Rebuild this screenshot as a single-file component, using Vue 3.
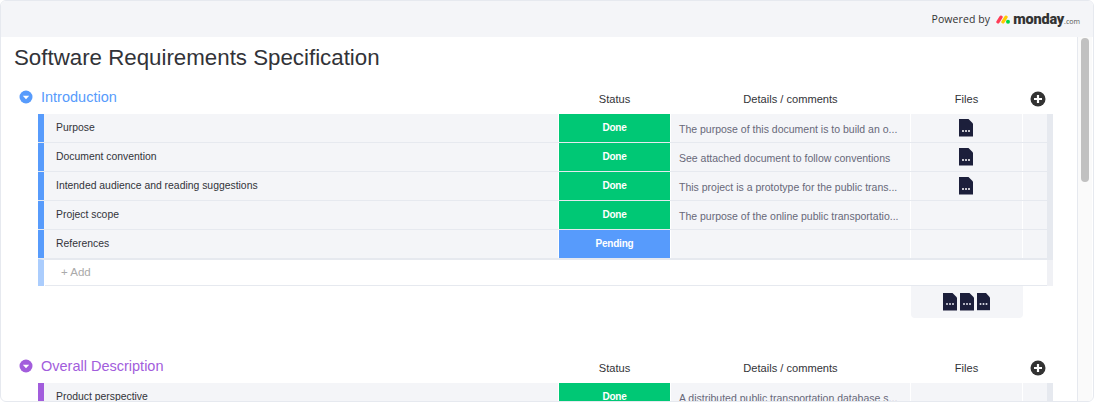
<script setup>
const groups = [
  {
    name: 'Introduction',
    color: '#579bfc',
    rows: [
      { name: 'Purpose', status: 'Done', details: 'The purpose of this document is to build an o...', file: true },
      { name: 'Document convention', status: 'Done', details: 'See attached document to follow conventions', file: true },
      { name: 'Intended audience and reading suggestions', status: 'Done', details: 'This project is a prototype for the public trans...', file: true },
      { name: 'Project scope', status: 'Done', details: 'The purpose of the online public transportatio...', file: false },
      { name: 'References', status: 'Pending', details: '', file: false },
    ],
    footer: true,
  },
  {
    name: 'Overall Description',
    color: '#a25ddc',
    rows: [
      { name: 'Product perspective', status: 'Done', details: 'A distributed public transportation database s...', file: false },
    ],
    footer: false,
  },
]
</script>

<template>
  <div class="window">
    <header class="topbar">
      <span class="powered">Powered by</span>
      <svg class="logo-mark" width="14" height="9" viewBox="0 0 21 13">
        <line x1="3" y1="10" x2="7.500" y2="3" stroke="#ff3d57" stroke-width="5" stroke-linecap="round" />
        <line x1="10.500" y1="10" x2="15" y2="3" stroke="#ffcb00" stroke-width="5" stroke-linecap="round" />
        <circle cx="18" cy="10" r="3" fill="#00d647" />
      </svg>
      <span class="brand">monday</span><span class="brand-com">.com</span>
    </header>

    <div class="body">
      <main class="content">
        <h1 class="title">Software Requirements Specification</h1>

        <section v-for="group in groups" :key="group.name" class="group">
          <div class="table-row head">
            <div class="group-name" :style="{ color: group.color }">
              <svg class="toggle" width="14" height="14" viewBox="0 0 14 14">
                <circle cx="7" cy="7" r="6.500" :fill="group.color" />
                <path d="M3.800 5.800h6.400L7 9.200z" fill="#fff" />
              </svg>
              {{ group.name }}
            </div>
            <div class="col-title">Status</div>
            <div class="col-title">Details / comments</div>
            <div class="col-title">Files</div>
            <div class="add-col">
              <svg width="16" height="16" viewBox="0 0 16 16">
                <circle cx="8" cy="8" r="7.500" fill="#333" />
                <path d="M8 4v8M4 8h8" stroke="#fff" stroke-width="2.200" />
              </svg>
            </div>
          </div>

          <div v-for="row in group.rows" :key="row.name" class="table-row item">
            <div class="name-cell" :style="{ borderLeftColor: group.color }">{{ row.name }}</div>
            <div class="status-cell" :class="row.status.toLowerCase()">{{ row.status }}</div>
            <div class="details-cell">{{ row.details }}</div>
            <div class="files-cell">
              <svg v-if="row.file" class="file" width="14" height="18" viewBox="0 0 14 18">
                <path d="M0 0h9.500L14 4.500V17.500H0z" fill="#1c1f3b" />
                <circle cx="4" cy="12" r="1" fill="#fff" />
                <circle cx="7" cy="12" r="1" fill="#fff" />
                <circle cx="10" cy="12" r="1" fill="#fff" />
              </svg>
            </div>
            <div class="blank-cell"></div>
            <div class="end-cell"></div>
          </div>

          <template v-if="group.footer">
            <div class="add-row">
              <div class="add-input">+ Add</div>
              <div class="add-end"></div>
            </div>
            <div class="summary-row">
              <div class="summary">
                <svg class="file" width="14" height="18" viewBox="0 0 14 18">
                  <path d="M0 0h9.500L14 4.500V17.500H0z" fill="#1c1f3b" />
                  <circle cx="4" cy="11" r="1" fill="#dfe0ea" />
                  <circle cx="7" cy="11" r="1" fill="#dfe0ea" />
                  <circle cx="10" cy="11" r="1" fill="#dfe0ea" />
                </svg>
                <svg class="file" width="14" height="18" viewBox="0 0 14 18">
                  <path d="M0 0h9.500L14 4.500V17.500H0z" fill="#1c1f3b" />
                  <circle cx="4" cy="11" r="1" fill="#dfe0ea" />
                  <circle cx="7" cy="11" r="1" fill="#dfe0ea" />
                  <circle cx="10" cy="11" r="1" fill="#dfe0ea" />
                </svg>
                <svg class="file" width="13" height="18" viewBox="0 0 13 18">
                  <path d="M0 0h9l4 4.500V17H0z" fill="#1c1f3b" />
                  <path d="M0 17.500h13" stroke="#c5c7d0" />
                  <circle cx="3.500" cy="11" r="1" fill="#dfe0ea" />
                  <circle cx="6.500" cy="11" r="1" fill="#dfe0ea" />
                  <circle cx="9.500" cy="11" r="1" fill="#dfe0ea" />
                </svg>
              </div>
            </div>
          </template>
        </section>
      </main>

      <aside class="scrollbar">
        <div class="thumb"></div>
      </aside>
    </div>
  </div>
</template>

<style>
html, body {
  margin: 0;
  background: #fff;
  overflow: hidden;
}
</style>

<style scoped>
.window {
  width: 1094px;
  height: 402px;
  box-sizing: border-box;
  border: 1px solid #e6e9ef;
  border-radius: 6px;
  overflow: hidden;
  display: flex;
  flex-direction: column;
  background: #fff;
  font-family: "Liberation Sans", Arial, sans-serif;
  color: #323338;
}

.topbar {
  height: 36px;
  flex: none;
  background: #f4f5f8;
  display: flex;
  align-items: center;
  justify-content: flex-end;
  padding-right: 13px;
}

.powered {
  font-family: "Open Sans", sans-serif;
  font-size: 10.500px;
  letter-spacing: 0.1px;
  color: #333;
  margin-right: 6px;
}

.logo-mark {
  margin-right: 3px;
}

.brand {
  font-family: Roboto, sans-serif;
  font-weight: 900;
  font-size: 14.500px;
  letter-spacing: -0.2px;
  color: #333;
}

.brand-com {
  font-family: "Open Sans", sans-serif;
  font-size: 7px;
  color: #555;
  margin-top: 5px;
}

.body {
  flex: 1;
  min-height: 0;
  display: flex;
}

.content {
  flex: 1;
  min-width: 0;
  padding-left: 13px;
  overflow: hidden;
}

.title {
  margin: 0;
  padding-top: 6px;
  height: 30px;
  font-size: 22.300px;
  line-height: 30px;
  font-weight: 400;
  color: #323338;
}

.group {
  padding-bottom: 24px;
}

.table-row {
  display: grid;
  grid-template-columns: 520px 111px 239px 111px 24px 5px;
  column-gap: 1px;
  margin-left: 24px;
  width: 1015px;
}

.head {
  height: 41px;
  margin-left: 5px;
  width: 1027px;
  grid-template-columns: 539px 111px 239px 111px 23px;
  align-items: center;
  padding-top: 11px;
  box-sizing: border-box;
}

.group-name {
  display: flex;
  align-items: center;
  gap: 8px;
  font-size: 14.500px;
  height: 18px;
  margin-top: -4px;
}

.toggle {
  flex: none;
}

.col-title {
  text-align: center;
  font-size: 11.100px;
  color: #323338;
}

.add-col {
  display: flex;
  justify-content: flex-end;
  height: 16px;
}

.item {
  height: 28px;
  margin-bottom: 1px;
  font-size: 10.500px;
  line-height: 28px;
  box-shadow: 0 1px 0 #e6e9ef;
}

.name-cell {
  background: #f4f5f8;
  border-left: 6px solid;
  padding-left: 12px;
  color: #323338;
  font-size: 10.400px;
}

.status-cell {
  color: #fff;
  font-weight: 700;
  text-align: center;
  font-size: 10px;
  letter-spacing: -0.2px;
}

.status-cell.done {
  background: #00c875;
}

.status-cell.pending {
  background: #579bfc;
}

.details-cell {
  background: #f4f5f8;
  padding-left: 8px;
  line-height: 30px;
  color: #676879;
  white-space: nowrap;
  overflow: hidden;
}

.files-cell {
  background: #f4f5f8;
  display: flex;
  align-items: center;
  justify-content: center;
  padding-right: 2px;
}

.blank-cell {
  background: #f4f5f8;
}

.end-cell {
  background: #e6e9ef;
  margin-left: -1px;
}

.add-row {
  display: flex;
  margin-left: 24px;
  width: 1015px;
  height: 27px;
  border-left: 6px solid #abcdfd;
  border-top: 1px solid #e6e9ef;
  box-sizing: border-box;
}

.add-input {
  flex: 1;
  margin-left: 1px;
  padding-left: 16px;
  line-height: 24px;
  font-size: 11.500px;
  color: #aaa;
  border-bottom: 1px solid #e6e9ef;
}

.add-end {
  width: 6px;
  background: #f0f1f5;
}

.summary-row {
  display: flex;
  margin-left: 897px;
}

.summary {
  width: 112px;
  height: 32px;
  box-sizing: border-box;
  padding-right: 2px;
  background: #f4f5f8;
  border-radius: 0 0 4px 4px;
  display: flex;
  align-items: center;
  justify-content: center;
  gap: 3px;
}

.scrollbar {
  width: 15px;
  flex: none;
  margin-right: 1px;
  border-left: 1px solid #e6e9ef;
  background: #fafafa;
  padding: 1px 3px 0;
  box-sizing: border-box;
}

.thumb {
  height: 144px;
  width: 8px;
  background: #c1c1c1;
  border-radius: 4px;
}
</style>
